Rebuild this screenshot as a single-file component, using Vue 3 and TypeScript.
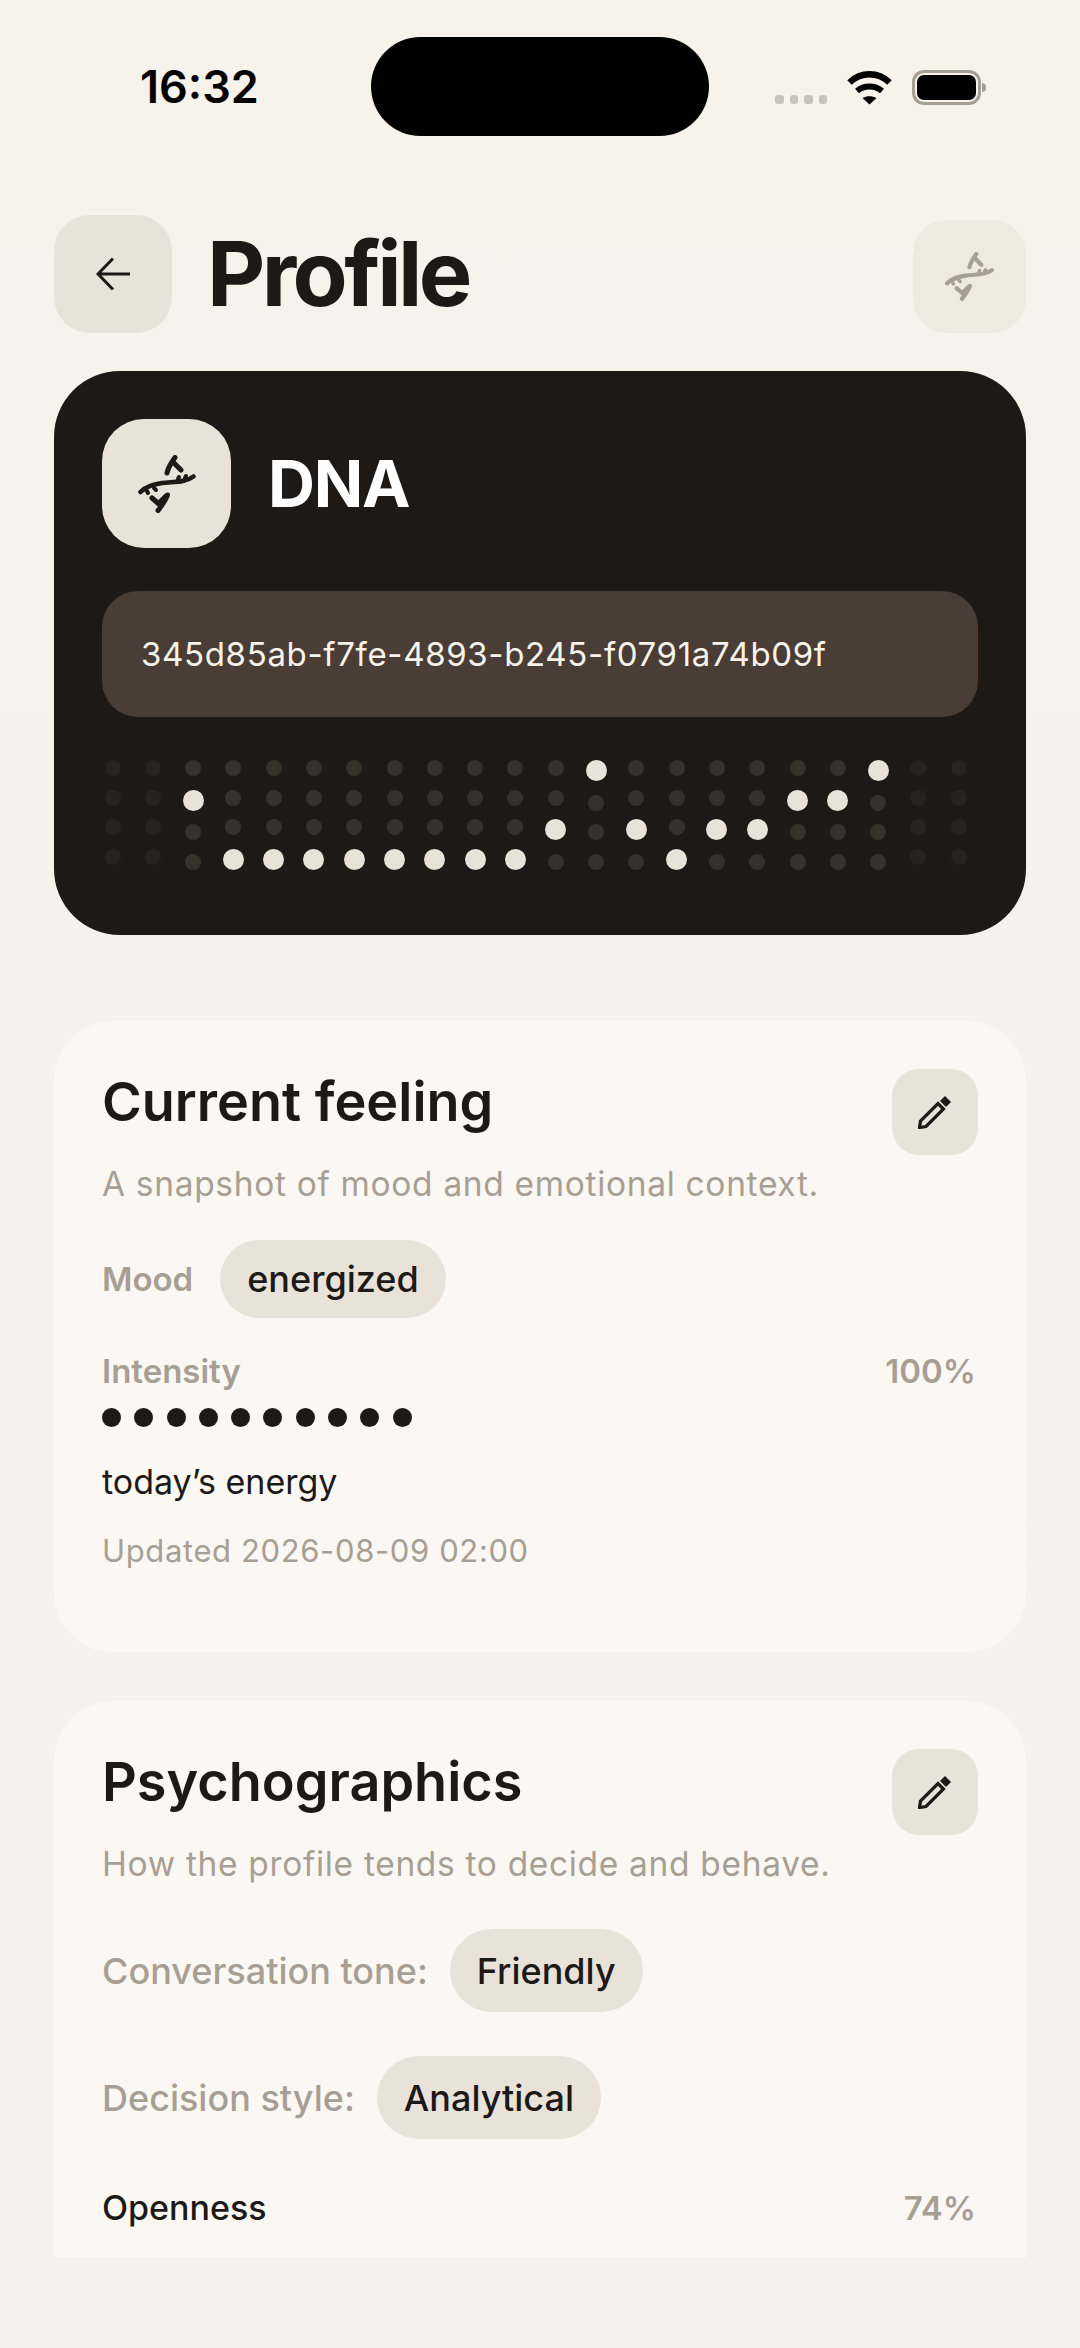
<script setup lang="ts">
const litRows: Record<number, number> = {
  2: 1, 3: 3, 4: 3, 5: 3, 6: 3, 7: 3, 8: 3, 9: 3, 10: 3,
  11: 2, 12: 0, 13: 2, 14: 3, 15: 2, 16: 2, 17: 1, 18: 1, 19: 0
}
const columns = Array.from({ length: 22 }, (_, i) => i)
const rows = [0, 1, 2, 3]
const intensity = Array.from({ length: 10 }, (_, i) => i)
</script>

<template>
  <div class="phone">
    <div class="island"></div>
    <header class="status">
      <span class="time">16:32</span>
      <div class="status-icons">
        <div class="signal"><i></i><i></i><i></i><i></i></div>
        <svg class="wifi" width="45" height="35" viewBox="0 0 45 35">
          <path d="M2.5 12.5C14 1.5 31 1.5 42.5 12.5" fill="none" stroke="#000" stroke-width="6.5" />
          <path d="M10 21C17 15 28 15 35 21" fill="none" stroke="#000" stroke-width="6" />
          <path d="M15.5 28C20 25.5 25 25.5 29.5 28L22.5 34.5Z" fill="#000" />
        </svg>
        <div class="battery"><div class="battery-level"></div></div>
        <div class="battery-nub"></div>
      </div>
    </header>

    <main class="content">
      <div class="topbar">
        <button class="back">
          <svg width="34" height="32" viewBox="0 0 34 32" fill="none" stroke="#1c1917" stroke-width="3">
            <path d="M34 16H2M17 0.5L2 16L17 31.5" />
          </svg>
        </button>
        <h1 class="page-title">Profile</h1>
        <button class="dna-btn">
          <svg class="dna-small" width="49" height="49" viewBox="0 0 58 58" fill="none" stroke="#a89f94" stroke-linecap="round">
            <path d="M2.5 37C8 31 16 29.500 24 28C34 26.500 47 28 55.500 21.500" stroke-width="5" />
            <path d="M37 2.500C33 8 30 13 29 18M36 8L43 15" stroke-width="5" />
            <path d="M20 55.500C24 50 28 45 29.500 40M22 50L14 43M22 47L28 41" stroke-width="5" />
            <path d="M9 36L10 38M16 33L18 35M40 24L41 22M47 23L48 21" stroke-width="4" />
          </svg>
        </button>
      </div>

      <section class="dna-card">
        <div class="dna-head">
          <div class="dna-icon">
            <svg width="58" height="58" viewBox="0 0 58 58" fill="none" stroke="#1c1917" stroke-linecap="round">
              <path d="M2.500 37C8 31 16 29.500 24 28C34 26.500 47 28 55.500 21.500" stroke-width="4.500" />
              <path d="M37 2.500C33 8 30 13 29 18M36 8L43 15" stroke-width="5" />
              <path d="M20 55.500C24 50 28 45 29.500 40M22 50L14 43M22 47L28 41" stroke-width="5" />
              <path d="M9 36L10 38M16 33L18 35M40 24L41 22M47 23L48 21" stroke-width="4" />
            </svg>
          </div>
          <h2 class="dna-title">DNA</h2>
        </div>
        <div class="dna-id">345d85ab-f7fe-4893-b245-f0791a74b09f</div>
        <div class="dots">
          <div v-for="c in columns" :key="c" class="dot-col" :class="{ faded: c < 2 || c > 19 }">
            <span v-for="r in rows" :key="r" class="dot" :class="{ lit: litRows[c] === r }"></span>
          </div>
        </div>
      </section>

      <section class="card feeling">
        <button class="edit">
          <svg width="34" height="34" viewBox="0 0 34 34">
            <path d="M1.500 32.500L2.500 26L20 8.500L25.500 14L8 31.500Z" fill="none" stroke="#1c1917" stroke-width="3.200" />
            <path d="M22 6L27 1L33 7L28 12Z" fill="#1c1917" />
          </svg>
        </button>
        <h3 class="card-title">Current feeling</h3>
        <p class="card-sub">A snapshot of mood and emotional context.</p>
        <div class="mood-row">
          <span class="label">Mood</span>
          <span class="pill">energized</span>
        </div>
        <div class="between intensity-row">
          <span class="label">Intensity</span>
          <span class="label">100%</span>
        </div>
        <div class="intensity-dots">
          <i v-for="n in intensity" :key="n"></i>
        </div>
        <p class="note">today’s energy</p>
        <p class="updated">Updated 2026-08-09 02:00</p>
      </section>

      <section class="card psycho">
        <button class="edit">
          <svg width="34" height="34" viewBox="0 0 34 34">
            <path d="M1.500 32.500L2.500 26L20 8.500L25.500 14L8 31.500Z" fill="none" stroke="#1c1917" stroke-width="3.200" />
            <path d="M22 6L27 1L33 7L28 12Z" fill="#1c1917" />
          </svg>
        </button>
        <h3 class="card-title">Psychographics</h3>
        <p class="card-sub">How the profile tends to decide and behave.</p>
        <div class="trait-row first">
          <span class="trait-label">Conversation tone:</span>
          <span class="pill tall">Friendly</span>
        </div>
        <div class="trait-row">
          <span class="trait-label">Decision style:</span>
          <span class="pill tall">Analytical</span>
        </div>
        <div class="between openness">
          <span class="metric">Openness</span>
          <span class="label">74%</span>
        </div>
      </section>
    </main>
  </div>
</template>

<style>
html, body {
  margin: 0;
  background: #f6f1ec;
}
</style>

<style scoped>
.phone {
  position: relative;
  width: 1080px;
  height: 2348px;
  overflow: hidden;
  background: linear-gradient(#f7f3eb, #f6f1ec);
  color: #1c1917;
  font-family: Inter, "Liberation Sans", sans-serif;
}

.island {
  position: absolute;
  top: 37px;
  left: 371px;
  width: 338px;
  height: 99px;
  border-radius: 50px;
  background: #000;
}

.status {
  display: flex;
  justify-content: space-between;
  height: 215px;
  padding: 0 94px 0 140px;
  box-sizing: border-box;
}

.time {
  margin-top: 60px;
  font-size: 45px;
  line-height: 54px;
  font-weight: 600;
  color: #000;
}

.status-icons {
  display: flex;
  align-items: flex-start;
  padding-top: 70px;
}

.signal {
  display: flex;
  gap: 6px;
  margin: 25px 20px 0 0;
}

.signal i {
  width: 8.500px;
  height: 8.500px;
  border-radius: 3px;
  background: #c9c3b9;
}

.wifi {
  margin-right: 20px;
}

.battery {
  width: 69px;
  height: 35px;
  box-sizing: border-box;
  padding: 2px;
  border: 3px solid #a89f94;
  border-radius: 12px;
}

.battery-level {
  height: 100%;
  border-radius: 7px;
  background: #000;
}

.battery-nub {
  width: 4px;
  height: 9px;
  margin: 13px 0 0 1px;
  border-radius: 0 4px 4px 0;
  background: #a89f94;
}

.content {
  height: 2042px;
  margin: 0 54px;
  overflow: hidden;
}

button {
  padding: 0;
  border: none;
  display: flex;
  align-items: center;
  justify-content: center;
}

.topbar {
  display: flex;
  align-items: flex-end;
}

.back {
  width: 118px;
  height: 118px;
  border-radius: 36px;
  background: #e8e2d9;
}

.page-title {
  flex: 1;
  margin: 0 0 0 35px;
  align-self: center;
  font-size: 90px;
  line-height: 118px;
  font-weight: 700;
  letter-spacing: -3.600px;
}

.dna-btn {
  width: 113px;
  height: 113px;
  border-radius: 34px;
  background: #efe9e0;
}

.dna-card {
  margin-top: 38px;
  height: 564px;
  box-sizing: border-box;
  padding: 48px;
  border-radius: 66px;
  background: #1c1917;
}

.dna-head {
  display: flex;
  align-items: center;
  gap: 37px;
}

.dna-icon {
  display: flex;
  align-items: center;
  justify-content: center;
  width: 129px;
  height: 129px;
  border-radius: 42px;
  background: #e8e2d9;
}

.dna-title {
  margin: 0;
  font-size: 65px;
  font-weight: 700;
  letter-spacing: -1.300px;
  color: #fff;
}

.dna-id {
  margin-top: 43px;
  height: 126px;
  line-height: 126px;
  padding-left: 39px;
  border-radius: 36px;
  background: #4a3d36;
  font-size: 33px;
  letter-spacing: 0.660px;
  color: #f7f3eb;
}

.dots {
  display: flex;
  gap: 19.300px;
  margin-top: 43px;
}

.dot-col {
  display: flex;
  flex-direction: column;
  align-items: center;
  gap: 13.600px;
  width: 21px;
}

.dot {
  width: 16px;
  height: 16px;
  border-radius: 50%;
  background: #37312c;
}

.dot-col.faded .dot {
  background: #27231f;
}

.dot.lit {
  width: 21px;
  height: 21px;
  background: #e8e2d9;
}

.card {
  position: relative;
  box-sizing: border-box;
  padding: 48px;
  border-radius: 60px;
  background: #fbf8f3;
}

.feeling {
  margin-top: 86px;
  height: 631px;
}

.psycho {
  margin-top: 49px;
  height: 700px;
}

.edit {
  position: absolute;
  top: 48px;
  right: 48px;
  width: 86px;
  height: 86px;
  border-radius: 27px;
  background: #e8e2d9;
}

.card-title {
  margin: 0;
  font-size: 54px;
  line-height: 66px;
  font-weight: 600;
}

.card-sub {
  margin: 28px 0 0;
  font-size: 33.500px;
  line-height: 42px;
  letter-spacing: 0.670px;
  color: #a89f94;
}

.label {
  font-size: 33px;
  line-height: 40px;
  font-weight: 600;
  color: #a89f94;
}

.pill {
  display: inline-flex;
  align-items: center;
  height: 78px;
  padding: 0 27px;
  border-radius: 39px;
  background: #e8e2d9;
  font-size: 36px;
  font-weight: 500;
  color: #1c1917;
}

.pill.tall {
  height: 83px;
  border-radius: 42px;
}

.mood-row {
  display: flex;
  align-items: center;
  gap: 27px;
  margin-top: 35px;
}

.between {
  display: flex;
  align-items: center;
  justify-content: space-between;
  padding-right: 2px;
}

.intensity-row {
  margin-top: 33px;
}

.intensity-dots {
  display: flex;
  gap: 13.300px;
  margin-top: 17px;
}

.intensity-dots i {
  width: 19px;
  height: 19px;
  border-radius: 50%;
  background: #1c1917;
}

.note {
  margin: 34px 0 0;
  font-size: 34px;
  line-height: 42px;
}

.updated {
  margin: 28px 0 0;
  font-size: 31px;
  line-height: 40px;
  letter-spacing: 0.620px;
  color: #a89f94;
}

.trait-row {
  display: flex;
  align-items: center;
  gap: 22px;
  margin-top: 44px;
}

.trait-row.first {
  margin-top: 44px;
}

.trait-label {
  font-size: 36px;
  font-weight: 500;
  color: #a89f94;
}

.openness {
  margin-top: 48px;
}

.metric {
  font-size: 34px;
  line-height: 42px;
  font-weight: 500;
}
</style>
